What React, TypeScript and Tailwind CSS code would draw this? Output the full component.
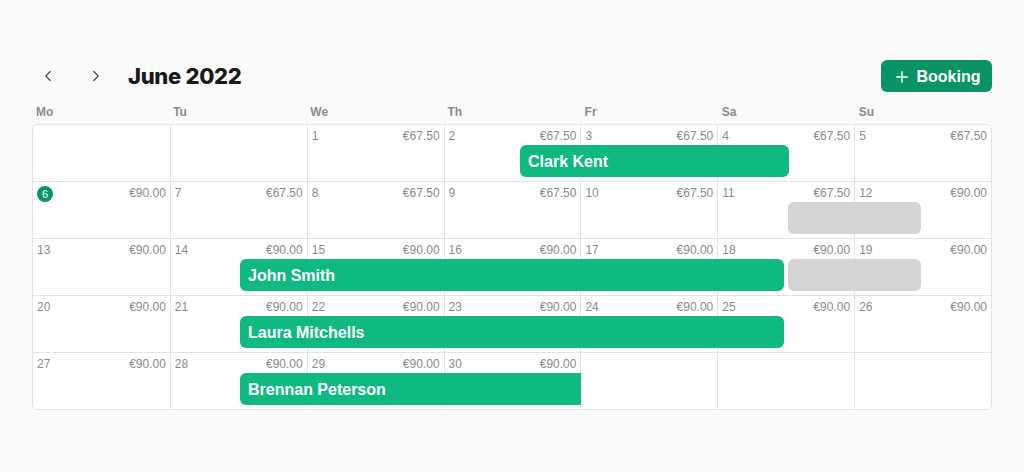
import { ChevronLeft, ChevronRight, Plus } from 'lucide-react';

const days = ['Mo', 'Tu', 'We', 'Th', 'Fr', 'Sa', 'Su'];

type Cell = { day?: number; price?: string };

const weeks: Cell[][] = [
  [{}, {}, { day: 1, price: '€67.50' }, { day: 2, price: '€67.50' }, { day: 3, price: '€67.50' }, { day: 4, price: '€67.50' }, { day: 5, price: '€67.50' }],
  [{ day: 6, price: '€90.00' }, { day: 7, price: '€67.50' }, { day: 8, price: '€67.50' }, { day: 9, price: '€67.50' }, { day: 10, price: '€67.50' }, { day: 11, price: '€67.50' }, { day: 12, price: '€90.00' }],
  [13, 14, 15, 16, 17, 18, 19].map((d) => ({ day: d, price: '€90.00' })),
  [20, 21, 22, 23, 24, 25, 26].map((d) => ({ day: d, price: '€90.00' })),
  [{ day: 27, price: '€90.00' }, { day: 28, price: '€90.00' }, { day: 29, price: '€90.00' }, { day: 30, price: '€90.00' }, {}, {}, {}],
];

interface Bar {
  name?: string;
  left: number;
  top: number;
  width: number;
  gray?: boolean;
  openEnd?: boolean;
}

// positions measured from the grid's inner edge
const bars: Bar[] = [
  { name: 'Clark Kent', left: 487, top: 20, width: 269 },
  { left: 755, top: 77, width: 133, gray: true },
  { name: 'John Smith', left: 207, top: 134, width: 544 },
  { left: 755, top: 134, width: 133, gray: true },
  { name: 'Laura Mitchells', left: 207, top: 191, width: 544 },
  { name: 'Brennan Peterson', left: 207, top: 248, width: 341, openEnd: true },
];

export default function App() {
  return (
    <div className="min-h-[472px] bg-[#fafafa] px-8 pt-[60px] font-['Liberation_Sans',Arial,sans-serif]">
      <div className="flex h-8 items-center justify-between">
        <div className="flex items-center">
          <button className="flex w-8 items-center justify-center text-[#444]">
            <ChevronLeft size={18} strokeWidth={1.5} />
          </button>
          <button className="ml-4 flex w-8 items-center justify-center text-[#444]">
            <ChevronRight size={18} strokeWidth={1.5} />
          </button>
          <h1 className="ml-4 mt-[1px] font-['Inter',sans-serif] text-[22px] font-extrabold tracking-[-0.3px] text-[#1a1a1a]">
            June 2022
          </h1>
        </div>
        <button className="flex h-8 w-[111px] items-center justify-center gap-1.5 rounded-md bg-[#0a9466] pt-[1px] text-base font-bold text-white">
          <Plus size={18} strokeWidth={2} />
          Booking
        </button>
      </div>

      <div className="grid h-8 grid-cols-7 pt-3">
        {days.map((d) => (
          <div key={d} className="pl-1 text-xs leading-4 font-bold text-[#8a8a8a]">
            {d}
          </div>
        ))}
      </div>

      <div className="relative overflow-hidden rounded-md border border-[#e3e3e3] bg-white">
        <div className="grid grid-cols-7">
          {weeks.map((week, wi) =>
            week.map((cell, ci) => (
              <div
                key={`${wi}-${ci}`}
                className={`flex items-start justify-between border-[#e3e3e3] px-1 text-xs text-[#8a8a8a] ${ci > 0 ? 'border-l' : ''} ${wi > 0 ? 'h-[57px] border-t pt-[3px]' : 'h-[56px] pt-[3px]'}`}
              >
                {cell.day === 6 ? (
                  <span className="mt-[1px] flex h-4 w-4 items-center justify-center rounded-full bg-[#0a9466] text-[11px] text-white">
                    6
                  </span>
                ) : (
                  <span>{cell.day}</span>
                )}
                <span>{cell.price}</span>
              </div>
            ))
          )}
        </div>
        {bars.map((b, i) => (
          <div
            key={i}
            className={`absolute flex h-8 items-center pl-2 pt-[1px] text-base font-bold text-white ${b.gray ? 'bg-[#d4d4d4]' : 'bg-[#10b981]'} ${b.openEnd ? 'rounded-l-md' : 'rounded-md'}`}
            style={{ left: b.left, top: b.top, width: b.width }}
          >
            {b.name}
          </div>
        ))}
      </div>
    </div>
  );
}
